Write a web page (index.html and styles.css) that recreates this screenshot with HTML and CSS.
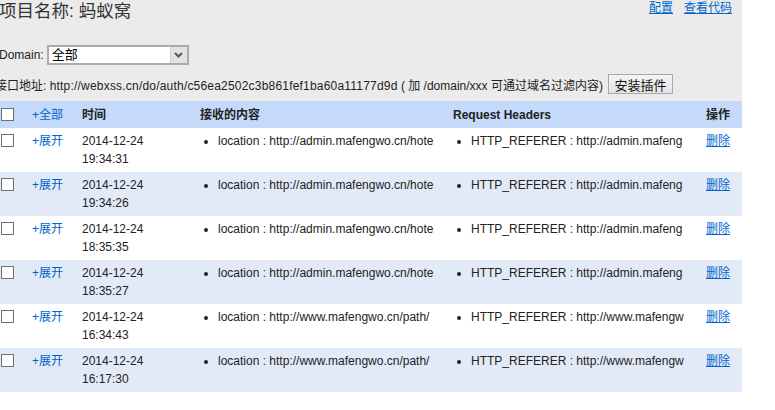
FILE: index.html
```html
<!DOCTYPE html>
<html lang="zh-CN">
<head>
<meta charset="utf-8">
<title>项目名称: 蚂蚁窝</title>
<link rel="stylesheet" href="styles.css">
</head>
<body>
<div class="page">
  <div class="topbar">
    <h1 class="title">项目名称: 蚂蚁窝</h1>
    <div class="toplinks">
      <a href="#" class="link">配置</a>
      <a href="#" class="link">查看代码</a>
    </div>
  </div>
  <div class="domain-row">
    <span class="label">Domain:</span>
    <div class="select">
      <span class="select-text">全部</span>
      <span class="select-btn">
        <svg width="9" height="6" viewBox="0 0 9 6"><path d="M1 1 L4.5 4.5 L8 1" fill="none" stroke="#555" stroke-width="2"/></svg>
      </span>
    </div>
  </div>
  <div class="api-row">
    <span class="api-text">接口地址: <span class="api-url">http://webxss.cn/do/auth/c56ea2502c3b861fef1ba60a11177d9d</span> ( 加 /domain/xxx 可通过域名过滤内容)</span>
    <button class="btn" type="button">安装插件</button>
  </div>
  <table class="grid">
    <colgroup>
      <col class="c-check"><col class="c-toggle"><col class="c-time"><col class="c-body"><col class="c-head"><col class="c-op">
    </colgroup>
    <thead>
      <tr>
        <th><span class="cb"></span></th>
        <th class="th-link"><a href="#" class="plain">+全部</a></th>
        <th>时间</th>
        <th>接收的内容</th>
        <th>Request Headers</th>
        <th>操作</th>
      </tr>
    </thead>
    <tbody>
      <tr>
        <td><span class="cb"></span></td>
        <td><a href="#" class="plain">+展开</a></td>
        <td>2014-12-24<br>19:34:31</td>
        <td><ul class="kv"><li>location : http://admin.mafengwo.cn/hote</li></ul></td>
        <td><ul class="kv"><li>HTTP_REFERER : http://admin.mafeng</li></ul></td>
        <td><a href="#" class="link">删除</a></td>
      </tr>
      <tr class="alt">
        <td><span class="cb"></span></td>
        <td><a href="#" class="plain">+展开</a></td>
        <td>2014-12-24<br>19:34:26</td>
        <td><ul class="kv"><li>location : http://admin.mafengwo.cn/hote</li></ul></td>
        <td><ul class="kv"><li>HTTP_REFERER : http://admin.mafeng</li></ul></td>
        <td><a href="#" class="link">删除</a></td>
      </tr>
      <tr>
        <td><span class="cb"></span></td>
        <td><a href="#" class="plain">+展开</a></td>
        <td>2014-12-24<br>18:35:35</td>
        <td><ul class="kv"><li>location : http://admin.mafengwo.cn/hote</li></ul></td>
        <td><ul class="kv"><li>HTTP_REFERER : http://admin.mafeng</li></ul></td>
        <td><a href="#" class="link">删除</a></td>
      </tr>
      <tr class="alt">
        <td><span class="cb"></span></td>
        <td><a href="#" class="plain">+展开</a></td>
        <td>2014-12-24<br>18:35:27</td>
        <td><ul class="kv"><li>location : http://admin.mafengwo.cn/hote</li></ul></td>
        <td><ul class="kv"><li>HTTP_REFERER : http://admin.mafeng</li></ul></td>
        <td><a href="#" class="link">删除</a></td>
      </tr>
      <tr>
        <td><span class="cb"></span></td>
        <td><a href="#" class="plain">+展开</a></td>
        <td>2014-12-24<br>16:34:43</td>
        <td><ul class="kv"><li>location : http://www.mafengwo.cn/path/</li></ul></td>
        <td><ul class="kv"><li>HTTP_REFERER : http://www.mafengw</li></ul></td>
        <td><a href="#" class="link">删除</a></td>
      </tr>
      <tr class="alt">
        <td><span class="cb"></span></td>
        <td><a href="#" class="plain">+展开</a></td>
        <td>2014-12-24<br>16:17:30</td>
        <td><ul class="kv"><li>location : http://www.mafengwo.cn/path/</li></ul></td>
        <td><ul class="kv"><li>HTTP_REFERER : http://www.mafengw</li></ul></td>
        <td><a href="#" class="link">删除</a></td>
      </tr>
    </tbody>
  </table>
</div>
</body>
</html>
```
FILE: styles.css
```css
html, body {
  margin: 0;
  padding: 0;
  background: #fff;
}
body {
  font-family: "Liberation Sans", Arial, "Noto Sans CJK SC", sans-serif;
  font-size: 12px;
  color: #222;
}
.page {
  width: 745px;
  margin-left: -3px;
  background: #ebebeb;
}
.topbar {
  display: flex;
  justify-content: space-between;
  align-items: flex-start;
  height: 24px;
}
.title {
  margin: 0 0 0 2px;
  font-size: 17.5px;
  line-height: 23px;
  font-weight: normal;
  color: #333;
}
.toplinks {
  display: flex;
  gap: 11px;
  padding-right: 10px;
  line-height: 16px;
}
.link {
  color: #0066cc;
  text-decoration: underline;
}
.plain {
  color: #0066cc;
  text-decoration: none;
}
.domain-row {
  display: flex;
  align-items: center;
  margin-top: 21px;
  height: 20px;
  padding-left: 2px;
}
.label {
  margin-right: 3px;
}
.select {
  box-sizing: border-box;
  width: 142px;
  height: 20px;
  border: 2px solid #ababab;
  background: #fff;
  display: flex;
  align-items: stretch;
}
.select-text {
  flex: 1;
  font-size: 13px;
  line-height: 16px;
  padding-left: 3px;
  color: #000;
}
.select-btn {
  width: 16px;
  background: #e3e3e3;
  border-left: 1px solid #cfcfcf;
  display: flex;
  align-items: center;
  justify-content: center;
}
.api-row {
  display: flex;
  align-items: center;
  margin-top: 9px;
  height: 20px;
  margin-left: -2px;
}
.api-text {
  white-space: nowrap;
}
.api-url {
  letter-spacing: 0.2px;
}
.btn {
  margin-left: 5px;
  box-sizing: border-box;
  width: 65px;
  height: 20px;
  padding: 0;
  border: 1px solid #a8a8a8;
  background: linear-gradient(#f4f4f4, #e4e4e4);
  font-family: "Noto Sans CJK SC", sans-serif;
  font-size: 13px;
  line-height: 17px;
  color: #111;
}
.grid {
  margin-top: 7px;
  width: 745px;
  table-layout: fixed;
  border-collapse: collapse;
  background: #fff;
}
.c-check { width: 31px; }
.c-toggle { width: 50px; }
.c-time { width: 118px; }
.c-body { width: 253px; }
.c-head { width: 253px; }
.c-op { width: 40px; }
.grid th {
  background: #c5d9fb;
  height: 27px;
  padding: 0 4px;
  text-align: left;
  font-weight: bold;
  color: #222;
  line-height: 18px;
  vertical-align: middle;
}
.grid th.th-link {
  font-weight: normal;
}
.grid td {
  height: 44px;
  box-sizing: border-box;
  padding: 4px;
  vertical-align: top;
  line-height: 18px;
}
.grid tr.alt td {
  background: #e3eaf7;
}
.cb {
  display: block;
  box-sizing: border-box;
  width: 13px;
  height: 13px;
  border: 1px solid #6f6f6f;
  background: #fff;
}
.grid td .cb {
  margin-top: 2px;
}
.kv {
  margin: 0;
  padding-left: 18px;
}
.kv li {
  white-space: nowrap;
}
```
